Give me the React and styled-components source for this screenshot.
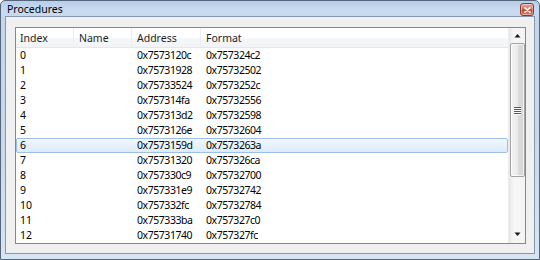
import React from "react";
import styled, { createGlobalStyle } from "styled-components";

const Global = createGlobalStyle`
  html, body { margin: 0; padding: 0; background: #fff; }
  body { font-family: "Noto Sans", "Open Sans", "DejaVu Sans", sans-serif; }
  * { box-sizing: border-box; }
`;

const Window = styled.div`
  width: 540px;
  height: 260px;
  border: 1px solid #55657a;
  border-radius: 5px 5px 0 0;
  background: linear-gradient(180deg, #b7cfea 0px, #c9dbf0 10px, #c3d6ec 20px, #c8d9ee 140px, #d8e5f3 260px);
  display: flex;
  flex-direction: column;
  overflow: hidden;
`;

const TitleBar = styled.div`
  height: 20px;
  display: flex;
  align-items: center;
  justify-content: space-between;
  padding: 0 5px 0 6px;
`;

const Title = styled.span`
  font-size: 10.5px;
  color: #000;
  line-height: 1;
  margin-top: 1px;
`;

const CloseBtn = styled.div`
  width: 14px;
  height: 13px;
  margin-top: 2px;
  border: 1px solid #8a3b32;
  border-radius: 3px;
  background: linear-gradient(180deg, #e9a99c 0%, #d4705f 45%, #c2442f 55%, #d8826a 100%);
  display: flex;
  align-items: center;
  justify-content: center;
  box-shadow: inset 0 0 0 1px rgba(255,255,255,0.35);
`;

const Client = styled.div`
  flex: 1;
  margin: 0 4px 5px 4px;
  border: 1px solid #8798ad;
  background: #f0f0f0;
  padding: 10px 8px 9px 9px;
  display: flex;
`;

const ListView = styled.div`
  flex: 1;
  border: 1px solid #828790;
  background: #fff;
  display: flex;
  overflow: hidden;
`;

const Body = styled.div`
  flex: 1;
  display: flex;
  flex-direction: column;
  overflow: hidden;
`;

const Header = styled.div`
  height: 20px;
  display: flex;
  flex: none;
  background: linear-gradient(180deg, #ffffff 0%, #ffffff 50%, #f6f7f8 51%, #f2f3f5 100%);
  border-bottom: 1px solid #e5e7ea;
`;

const HeaderCell = styled.div`
  width: ${p => p.$w}px;
  flex: ${p => (p.$grow ? 1 : "none")};
  padding-left: ${p => p.$pl}px;
  font-size: 10.5px;
  color: #1e1e1e;
  display: flex;
  align-items: center;
  border-right: ${p => (p.$grow ? "none" : "1px solid #eceef1")};
`;

const Row = styled.div`
  height: 15px;
  display: flex;
  flex: none;
  border: 1px solid ${p => (p.$sel ? "#9ebfe6" : "transparent")};
  border-radius: ${p => (p.$sel ? "2px" : "0")};
  background: ${p => (p.$sel ? "linear-gradient(180deg, #f1f7fe 0%, #dcebfc 100%)" : "transparent")};
`;

const Cell = styled.div`
  width: ${p => p.$w}px;
  flex: ${p => (p.$grow ? 1 : "none")};
  padding-left: ${p => p.$pl - 1}px;
  font-size: 10.5px;
  letter-spacing: ${p => (p.$hex ? "-0.45px" : "0")};
  color: #000;
  line-height: 13px;
  white-space: nowrap;
`;

const ScrollBar = styled.div`
  width: 17px;
  flex: none;
  display: flex;
  flex-direction: column;
  background: linear-gradient(90deg, #e8e8e8 0%, #f6f6f6 30%, #f4f4f4 100%);
  border-left: 1px solid #ececec;
`;

const ArrowBtn = styled.div`
  height: ${p => p.$h}px;
  flex: none;
  display: flex;
  align-items: center;
  justify-content: center;
`;

const Track = styled.div`
  flex: 1;
  display: flex;
  flex-direction: column;
`;

const Thumb = styled.div`
  height: 134px;
  margin: 0 0 0 1px;
  width: 15px;
  border: 1px solid #a3a3a3;
  border-radius: 2px;
  background: linear-gradient(90deg, #f3f3f3 0%, #ebebeb 50%, #dcdcdc 51%, #d5d5d5 100%);
  box-shadow: inset 0 0 0 1px rgba(255,255,255,0.7);
  display: flex;
  align-items: center;
  justify-content: center;
`;

const Grip = styled.div`
  width: 7px;
  display: flex;
  flex-direction: column;
  gap: 1px;
`;

const GripLine = styled.div`
  height: 1px;
  background: #5a5a5a;
  box-shadow: 0 1px 0 #ffffff;
`;

const Arrow = ({ up }) => (
  <svg width="7" height="5" viewBox="0 0 7 5">
    {up ? (
      <path d="M0.5 4.5 L3.5 1 L6.5 4.5 Z" fill="#1a1a1a" />
    ) : (
      <path d="M0.5 0.5 L3.5 4 L6.5 0.5 Z" fill="#1a1a1a" />
    )}
  </svg>
);

const cols = [
  { key: "index", label: "Index", w: 58, pl: 4 },
  { key: "name", label: "Name", w: 58, pl: 5 },
  { key: "addr", label: "Address", w: 69, pl: 5, hex: true },
  { key: "fmt", label: "Format", w: 0, pl: 5, grow: true, hex: true },
];

const data = [
  ["0", "", "0x7573120c", "0x757324c2"],
  ["1", "", "0x75731928", "0x75732502"],
  ["2", "", "0x75733524", "0x7573252c"],
  ["3", "", "0x757314fa", "0x75732556"],
  ["4", "", "0x757313d2", "0x75732598"],
  ["5", "", "0x7573126e", "0x75732604"],
  ["6", "", "0x7573159d", "0x7573263a"],
  ["7", "", "0x75731320", "0x757326ca"],
  ["8", "", "0x757330c9", "0x75732700"],
  ["9", "", "0x757331e9", "0x75732742"],
  ["10", "", "0x757332fc", "0x75732784"],
  ["11", "", "0x757333ba", "0x757327c0"],
  ["12", "", "0x75731740", "0x757327fc"],
];

export default function App() {
  return (
    <>
      <Global />
      <Window>
        <TitleBar>
          <Title>Procedures</Title>
          <CloseBtn>
            <svg width="7" height="6" viewBox="0 0 7 6">
              <path d="M1 0.8 L6 5.2 M6 0.8 L1 5.2" stroke="#fff" strokeWidth="1.6" strokeLinecap="round" />
            </svg>
          </CloseBtn>
        </TitleBar>
        <Client>
          <ListView>
            <Body>
              <Header>
                {cols.map(c => (
                  <HeaderCell key={c.key} $w={c.w} $pl={c.pl} $grow={c.grow}>
                    {c.label}
                  </HeaderCell>
                ))}
              </Header>
              {data.map((r, i) => (
                <Row key={i} $sel={i === 6}>
                  {cols.map((c, j) => (
                    <Cell key={c.key} $w={c.w} $pl={c.pl} $grow={c.grow} $hex={c.hex}>
                      {r[j]}
                    </Cell>
                  ))}
                </Row>
              ))}
            </Body>
            <ScrollBar>
              <ArrowBtn $h={15}><Arrow up /></ArrowBtn>
              <Track>
                <Thumb>
                  <Grip>
                    <GripLine />
                    <GripLine />
                    <GripLine />
                    <GripLine />
                  </Grip>
                </Thumb>
              </Track>
              <ArrowBtn $h={17}><Arrow /></ArrowBtn>
            </ScrollBar>
          </ListView>
        </Client>
      </Window>
    </>
  );
}
